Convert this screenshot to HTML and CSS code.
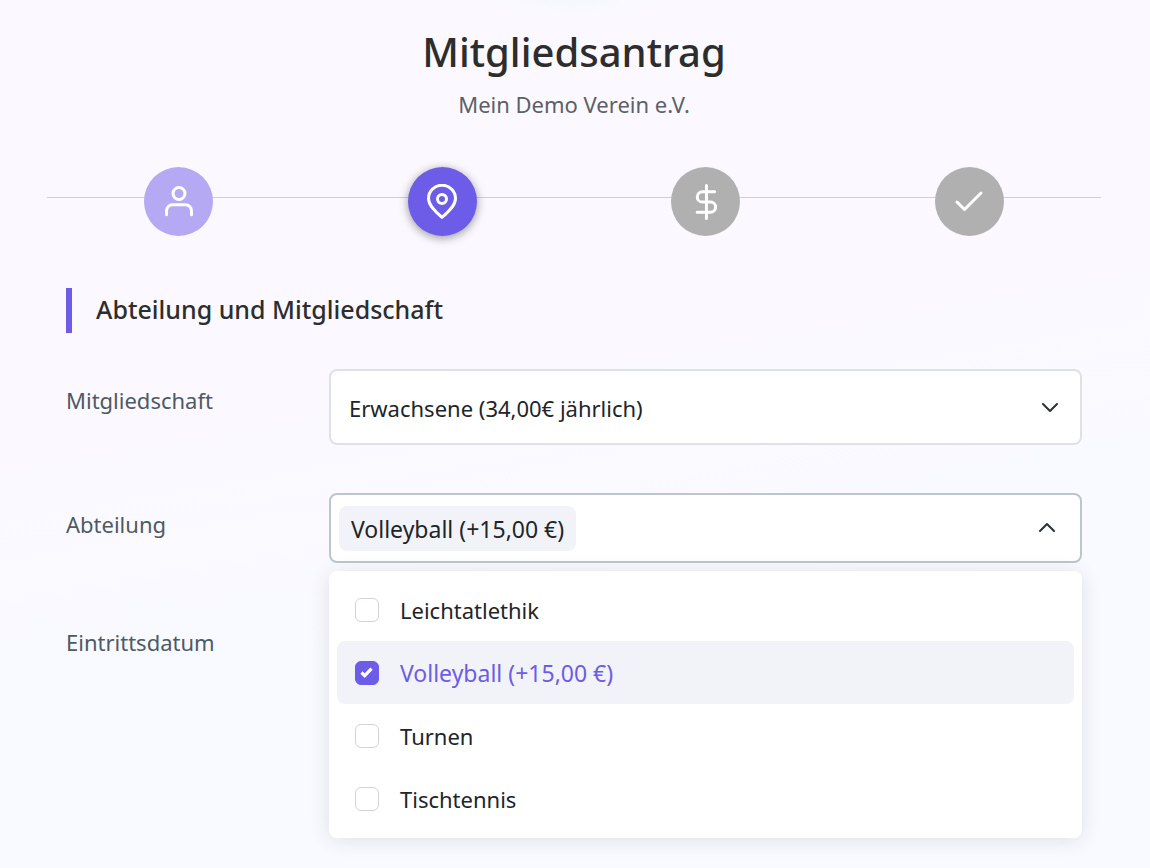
FILE: index.html
```html
<!DOCTYPE html>
<html lang="de">
<head>
<meta charset="utf-8">
<meta name="viewport" content="width=device-width, initial-scale=1">
<title>Mitgliedsantrag</title>
<link rel="stylesheet" href="styles.css">
</head>
<body>
<main class="page">
  <header class="header">
    <h1 class="title">Mitgliedsantrag</h1>
    <p class="subtitle">Mein Demo Verein e.V.</p>
  </header>

  <ol class="steps">
    <li class="step">
      <span class="badge badge-done">
        <svg class="icon" viewBox="0 0 24 24"><circle cx="12" cy="6.300" r="4"/><path d="M3.700 20.500v-2.700a4 4 0 0 1 4-4h8.600a4 4 0 0 1 4 4v2.700"/></svg>
      </span>
    </li>
    <li class="step">
      <span class="badge badge-active">
        <svg class="icon" viewBox="0 0 24 24"><path d="M12 22.300c4-3.500 9-8 9-12.700a9 8.800 0 0 0-18 0C3 14.300 8 18.800 12 22.300z"/><circle cx="12" cy="10" r="3"/></svg>
      </span>
    </li>
    <li class="step">
      <span class="badge badge-open">
        <svg class="icon" viewBox="0 0 24 24"><path d="M12.300 1v22M17.700 5.200H9.600a3.400 3.400 0 0 0 0 6.800h5.400a3.400 3.400 0 0 1 0 6.800H6.100"/></svg>
      </span>
    </li>
    <li class="step">
      <span class="badge badge-open">
        <svg class="icon" viewBox="0 0 24 24"><path d="M20 6 9 17l-5-5"/></svg>
      </span>
    </li>
  </ol>

  <form class="form">
    <h2 class="section">Abteilung und Mitgliedschaft</h2>

    <div class="row">
      <label class="label" for="membership">Mitgliedschaft</label>
      <div class="field">
        <select class="select" id="membership">
          <option>Erwachsene (34,00€ jährlich)</option>
        </select>
        <svg class="chevron" viewBox="0 0 16 16"><path d="m1 5 7 7 7-7"/></svg>
      </div>
    </div>

    <div class="row">
      <label class="label" for="department">Abteilung</label>
      <div class="field">
        <button class="multi" id="department" type="button" aria-expanded="true" aria-controls="departments">
          <span class="tag">Volleyball (+15,00 €)</span>
          <svg class="chevron-up" viewBox="0 0 16 16"><path d="m1 11 7-7 7 7"/></svg>
        </button>
        <div class="menu" id="departments">
          <label class="option"><input class="check" type="checkbox">Leichtatlethik</label>
          <label class="option option-on"><input class="check" type="checkbox" checked>Volleyball (+15,00 €)</label>
          <label class="option"><input class="check" type="checkbox">Turnen</label>
          <label class="option"><input class="check" type="checkbox">Tischtennis</label>
        </div>
      </div>
    </div>

    <div class="row">
      <label class="label" for="entry">Eintrittsdatum</label>
      <div class="field">
        <input class="date" id="entry" type="text">
      </div>
    </div>
  </form>
</main>
</body>
</html>
```

FILE: styles.css
```css
* {
  box-sizing: border-box;
}

body {
  margin: 0;
  min-height: 100vh;
  font-family: "Segoe UI", "Noto Sans", "Open Sans", sans-serif;
  font-size: 22px;
  line-height: 32px;
  color: #212529;
  background:
    radial-gradient(ellipse 90px 20px at 50% 0, #f6f8fe, transparent),
    linear-gradient(170deg, #fbf9ff 40%, #f8faff 70%);
}

.page {
  padding: 24px 49px 0 47px;
}

.header {
  text-align: center;
}

.title {
  margin: 0;
  font-size: 40px;
  line-height: 56px;
  font-weight: 500;
  color: #2d2d2d;
}

.subtitle {
  margin: 8px 0 0;
  color: #5c6068;
}

.steps {
  display: grid;
  grid-template-columns: repeat(4, 1fr);
  margin: 47px 0 0;
  padding: 0;
  list-style: none;
  background: linear-gradient(#cfcfd4, #cfcfd4) 0 30px / 100% 1px no-repeat;
}

.step {
  display: flex;
  justify-content: center;
}

.badge {
  display: flex;
  align-items: center;
  justify-content: center;
  width: 69px;
  height: 69px;
  border-radius: 50%;
}

.badge-done {
  background: #b4a9f2;
}

.badge-active {
  background: #6c5ce7;
  box-shadow: 0 2px 10px rgba(0, 0, 0, 0.4);
}

.badge-open {
  background: #b0b0b0;
}

.icon {
  width: 36px;
  height: 36px;
  fill: none;
  stroke: #fff;
  stroke-width: 2;
  stroke-linecap: round;
  stroke-linejoin: round;
}

.form {
  display: flex;
  flex-direction: column;
  gap: 48px;
  padding: 52px 19px 0;
}

.section {
  margin: 0 0 -12px;
  padding: 0 24px 2px;
  border-left: 6px solid #6c5ce7;
  font-size: 25px;
  line-height: 43px;
  font-weight: 500;
  color: #2d2d2d;
}

.row {
  display: grid;
  grid-template-columns: 263px 1fr;
}

.label {
  padding-top: 15px;
  color: #4f5963;
}

.field {
  position: relative;
}

.select,
.multi,
.date {
  display: block;
  width: 100%;
  border: 2px solid #dee2e6;
  border-radius: 8px;
  background: #fff;
  font: inherit;
  color: inherit;
}

.select {
  height: 76px;
  padding: 2px 56px 0 18px;
  appearance: none;
}

.chevron,
.chevron-up {
  width: 16px;
  height: 16px;
  fill: none;
  stroke: #2b3138;
  stroke-width: 2;
  stroke-linecap: round;
  stroke-linejoin: round;
}

.chevron {
  position: absolute;
  top: 30px;
  right: 24px;
  pointer-events: none;
}

.multi {
  display: flex;
  align-items: center;
  justify-content: space-between;
  height: 70px;
  padding: 0 25px 0 8px;
  border-color: #bdc5cd;
}

.tag {
  padding: 7px 12px 6px;
  border-radius: 8px;
  background: #f2f3f8;
  font-size: 23px;
}

.date {
  height: 70px;
}

.menu {
  position: absolute;
  z-index: 1;
  top: 78px;
  left: 0;
  right: 0;
  padding: 7px 8px 8px;
  border-radius: 8px;
  background: #fff;
  box-shadow: 0 2px 20px rgba(47, 43, 61, 0.12);
}

.option {
  display: flex;
  align-items: center;
  gap: 21px;
  height: 63px;
  padding: 0 18px;
  border-radius: 8px;
}

.option-on {
  background: #f2f3f8;
  color: #6c5ce7;
  font-size: 23px;
}

.check {
  width: 24px;
  height: 24px;
  margin: 0;
  border: 1px solid #d1d3da;
  border-radius: 6px;
  background: #fff;
  appearance: none;
}

.check:checked {
  border-color: #6c5ce7;
  background: #6c5ce7 url("data:image/svg+xml,%3Csvg xmlns='http://www.w3.org/2000/svg' viewBox='0 0 24 24' fill='none' stroke='white' stroke-width='3.200'%3E%3Cpath d='m6.500 11.500 3.200 3.200 6.800-7'/%3E%3C/svg%3E") center / 24px 24px;
}
```
